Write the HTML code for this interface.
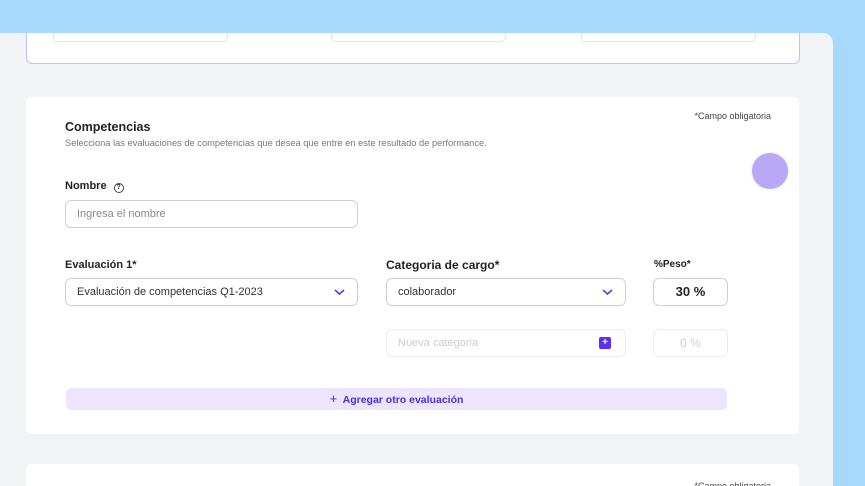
<!DOCTYPE html>
<html><head><style>
*{box-sizing:border-box;margin:0;padding:0}
html,body{width:865px;height:486px;overflow:hidden}
body{background:#a6d9fc;font-family:"Liberation Sans",sans-serif;position:relative}
.panel{position:absolute;left:0;top:33px;width:833px;height:453px;background:#f2f3f5;border-radius:0 10px 0 0}
.top{position:absolute;left:26px;top:33px;width:774px;height:31px;background:#fff;border:1px solid #c9bdf7;border-top:none;border-radius:0 0 6px 6px}
.tb{position:absolute;top:0;height:9px;border:1px solid #e3e3e6;border-top:none;border-radius:0 0 5px 5px}
.card{position:absolute;left:26px;width:773px;background:#fff;border-radius:5px}
.abs{position:absolute}
.lbl{font-size:11px;font-weight:bold;color:#222}
.in{position:absolute;height:28px;border:1px solid #cfd0d4;border-radius:6px;background:#fff;font-size:11px;color:#333;padding-left:11px;line-height:26px}
.chev{position:absolute;right:12px;top:9px}
</style></head><body>
<div class="panel"></div>
<div class="top">
 <div class="tb" style="left:26px;width:175px"></div>
 <div class="tb" style="left:304px;width:175px"></div>
 <div class="tb" style="left:554px;width:175px"></div>
</div>
<div class="card" style="top:97px;height:337px">
 <div class="abs" style="right:28px;top:14px;font-size:9px;color:#444">*Campo obligatoria</div>
 <div class="abs" style="left:39px;top:23px;font-size:12.5px;font-weight:bold;color:#222">Competencias</div>
 <div class="abs" style="left:39px;top:41px;font-size:9.3px;color:#777">Selecciona las evaluaciones de competencias que desea que entre en este resultado de performance.</div>
 <div class="abs" style="left:726px;top:56px;width:36px;height:36px;border-radius:50%;background:#b8a8f6;box-shadow:0 0 3px #ddd"></div>
 <div class="abs lbl" style="left:39px;top:83px">Nombre <span style="display:inline-block;width:10px;height:10px;border:1px solid #444;border-radius:50%;font-size:7px;text-align:center;line-height:8px;margin-left:4px">?</span></div>
 <div class="in" style="left:39px;top:103px;width:293px;color:#888">Ingresa el nombre</div>
 <div class="abs lbl" style="left:39px;top:162px">Evaluación 1*</div>
 <div class="abs lbl" style="left:360px;top:161px;font-size:12px">Categoria de cargo*</div>
 <div class="abs lbl" style="left:628px;top:162px;font-size:10px">%Peso*</div>
 <div class="in" style="left:39px;top:181px;width:293px">Evaluación de competencias Q1-2023<svg class="chev" width="11" height="8" viewBox="0 0 11 8"><path d="M1 2l4.5 4 4.5-4" fill="none" stroke="#5b3bf0" stroke-width="1.6"/></svg></div>
 <div class="in" style="left:360px;top:181px;width:240px">colaborador<svg class="chev" width="11" height="8" viewBox="0 0 11 8"><path d="M1 2l4.5 4 4.5-4" fill="none" stroke="#5b3bf0" stroke-width="1.6"/></svg></div>
 <div class="in" style="left:627px;top:181px;width:75px;text-align:center;padding:0;font-size:13px;font-weight:bold;color:#222">30 %</div>
 <div class="in" style="left:360px;top:232px;width:240px;border-color:#ececee;color:#ccc">Nueva categoria<span style="position:absolute;right:14px;top:7px;width:12px;height:12px;background:#5b30f0;border-radius:2px;color:#fff;font-size:10px;line-height:12px;text-align:center;font-weight:bold">+</span></div>
 <div class="in" style="left:627px;top:232px;width:75px;border-color:#ececee;text-align:center;padding:0;font-size:12px;color:#ccc">0 %</div>
 <div class="abs" style="left:40px;top:291px;width:661px;height:22px;background:#ece5fd;border-radius:5px;text-align:center;font-size:10.5px;font-weight:bold;color:#4b2ee0;line-height:22px"><span style="font-size:13px;font-weight:normal">+</span>&nbsp; Agregar otro evaluación</div>
</div>
<div class="card" style="top:464px;height:40px">
 <div class="abs" style="right:28px;top:17px;font-size:9px;color:#444">*Campo obligatoria</div>
</div>
</body></html>
